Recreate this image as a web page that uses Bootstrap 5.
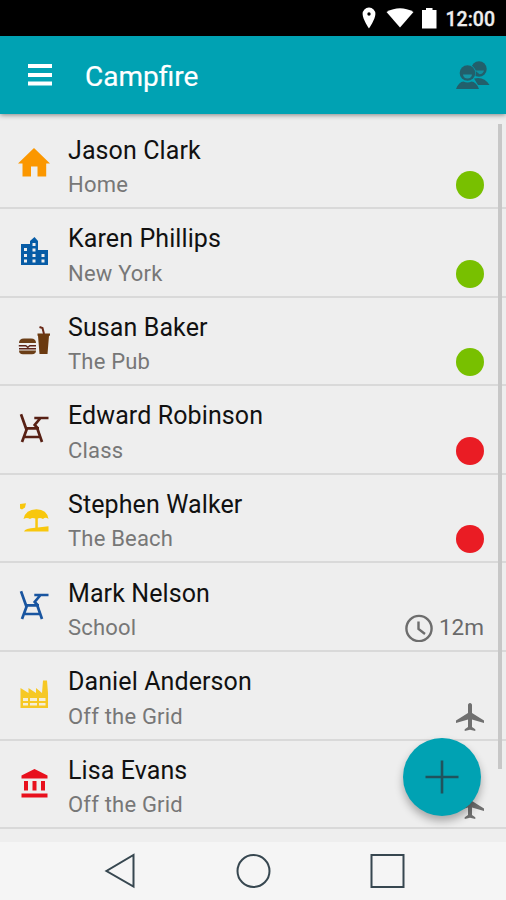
<!DOCTYPE html>
<html lang="en">
<head>
<meta charset="utf-8">
<meta name="viewport" content="width=device-width, initial-scale=1">
<title>Campfire</title>
<link href="https://cdn.jsdelivr.net/npm/bootstrap@5.3.0/dist/css/bootstrap.min.css" rel="stylesheet">
<style>
body{font-family:Roboto,sans-serif;background:#eee;color:#111}
svg{display:block;flex:none}
.phone{width:506px;height:900px}
.status-bar{height:36px;background:#000;padding-right:11px}
.clock-text{font-size:19.5px;line-height:34px;font-weight:500;color:#eee;margin-left:4px;padding-top:3px;-webkit-text-stroke:.3px #eee}
.app-bar{height:78px;background:#00a2b3;padding:0 16px 0 28px;box-shadow:0 1px 5px rgba(0,0,0,.45);z-index:2}
.app-title{font-size:28px;line-height:32px;color:#fff;margin-left:33px;padding-top:3px;-webkit-text-stroke:.2px #fff}
.people{height:78px;padding-top:25px}
.contacts{padding-top:6.4px;height:728px;background:#eee}
.contact{height:88.6px;border-bottom:2px solid #d9d9d9;padding:0 22px 0 18px}
.place{margin-top:26px}
.who{margin-left:18px;padding-top:14.2px}
.who-name{font-size:25px;line-height:32px;letter-spacing:.1px}
.who-place{font-size:22px;line-height:30px;color:#777;padding-top:3.4px;letter-spacing:.2px}
.state{padding-bottom:8px}
.dot{width:28px;height:28px}
.dot-on{background:#78c000}
.dot-off{background:#ea1c24}
.mins{font-size:22.5px;line-height:28px;color:#6a6a6a;margin-left:6px;margin-top:-2px}
.scroll-thumb{right:4px;top:10px;width:4px;height:645px;background:#c7c7c7}
.fab{left:403px;top:624px;width:78px;height:78px;background:#00a2b3;box-shadow:0 5px 9px rgba(0,0,0,.3);padding:0;border:0}
.nav-keys{height:58px;background:#f5f5f5;padding:0 101px 0 104px}
</style>
<script src="https://cdn.jsdelivr.net/npm/bootstrap@5.3.0/dist/js/bootstrap.bundle.min.js"></script>
</head>
<body>
<svg width="0" height="0" class="position-absolute" aria-hidden="true">
<symbol id="desk" viewBox="0 0 32 32"><path d="M3 2.300 8 16.300H21M16.300 6H30.500M22.500 6 16.700 13 20 16.500M9 16.500 4 30M19.300 16.500 24 30M7 25H22" fill="none" stroke="currentColor" stroke-width="2.700"/></symbol>
<symbol id="plane" viewBox="0 0 28 28"><path d="M14 0c-1.200 0-2 1-2 2.200V10L0 17.500V20l12-3.600V24l-3.300 2.300V28l5.300-1.300 5.300 1.300v-1.700L16 24v-7.600L28 20v-2.500L16 10V2.200C16 1 15.200 0 14 0z" fill="currentColor"/></symbol>
</svg>
<main class="phone position-relative overflow-hidden d-flex flex-column">
<div class="status-bar d-flex align-items-center justify-content-end">
<svg width="80" height="24" viewBox="0 0 80 24" fill="#fff"><path d="M7 1.500A6.300 6.300 0 0 0 .6 8C.6 13 7 22.500 7 22.500S13.400 13 13.400 8A6.300 6.300 0 0 0 7 1.500zm0 4.800a1.700 1.700 0 1 1 0 3.400 1.700 1.700 0 0 1 0-3.400z" fill-rule="evenodd"/><path d="M24.500 6Q38-1.500 51.500 6L38 21.500z"/><path d="M64 2h6.500v2H74.500v18.500H60V4h4z"/></svg>
<span class="clock-text">12:00</span>
</div>
<header class="app-bar d-flex align-items-center position-relative">
<svg width="24" height="22" viewBox="0 0 24 22"><path d="M0 2h24M0 11h24M0 19.500h24" stroke="#fff" stroke-width="4"/></svg>
<h1 class="app-title fw-normal mb-0">Campfire</h1>
<div class="people ms-auto">
<svg width="34" height="28" viewBox="0 0 34 28" fill="#225f6b"><circle cx="23" cy="8" r="7.700"/><path d="M18 17.500Q28 15 33.500 24H22z"/><path d="M19 9.500h9a5 5 0 0 1-4.500 3.700" fill="#1090a0"/><circle cx="11.500" cy="12" r="8.400" fill="#00a2b3"/><circle cx="11.500" cy="12" r="7.800"/><path d="M7 13.500h9a4.500 4 0 0 1-9 0z" fill="#1596a5"/><path d="M0 28q3-7.500 7.500-7.500 4 2 8 0Q20 20.500 23 28z"/></svg>
</div>
</header>
<section class="contacts position-relative overflow-hidden">
<div class="contact d-flex"><svg class="place" width="32" height="32" viewBox="0 0 32 32"><path d="M16 2 32 17.500H28.200V30.500H19.500V20.500h-6.500v10H4.500v-13H0z" fill="#fb9700"/></svg>
<div class="who"><div class="who-name">Jason Clark</div><div class="who-place">Home</div></div><div class="state ms-auto align-self-end"><div class="dot dot-on rounded-circle"></div></div></div>
<div class="contact d-flex"><svg class="place" width="32" height="32" viewBox="0 0 32 32"><path d="M3 9h9V6l4.500-4L20 6v9h10v15H3z" fill="#075ca6"/><path d="M6 13h3v3H6zm0 6h3v3H6zm0 5.500h3v3H6zM14.500 8h3v3h-3zm0 5.500h3v3h-3zm0 5.500h3v3h-3zm0 5.500h3v3h-3zM23.500 19h3v3h-3zm0 5.500h3v3h-3z" fill="#eee"/></svg>
<div class="who"><div class="who-name">Karen Phillips</div><div class="who-place">New York</div></div><div class="state ms-auto align-self-end"><div class="dot dot-on rounded-circle"></div></div></div>
<div class="contact d-flex"><svg class="place" width="32" height="32" viewBox="0 0 32 32"><path d="M1 19Q1 14.500 6 14.500h7Q18 14.500 18 19zM1 26.500h17q0 3.800-4 3.800H5q-4 0-4-3.800z" fill="#6b3e17"/><path d="M.8 21.800h7l2 1.500 2-1.500H18M1 24.800h17" fill="none" stroke="#5c2418" stroke-width="1.400"/><path d="M19.500 9.500h12.500v2.200h-1L29.500 30H21.500L20 11.700h-.5z" fill="#6b3a10"/><path d="M21.500 3l3 1 1.500 6" fill="none" stroke="#6b2a18" stroke-width="2"/></svg>
<div class="who"><div class="who-name">Susan Baker</div><div class="who-place">The Pub</div></div><div class="state ms-auto align-self-end"><div class="dot dot-on rounded-circle"></div></div></div>
<div class="contact d-flex"><svg class="place" width="32" height="32" color="#572014"><use href="#desk"/></svg>
<div class="who"><div class="who-name">Edward Robinson</div><div class="who-place">Class</div></div><div class="state ms-auto align-self-end"><div class="dot dot-off rounded-circle"></div></div></div>
<div class="contact d-flex"><svg class="place" width="32" height="32" viewBox="0 0 32 32" fill="#f8c70d"><path d="M2 3l6-.8-1 4.300L4 8.500 2 7.500zM5.500 18Q7.500 8.500 18.500 8.300 29 8.500 30.500 18q-3-2.500-5.500 0-3-2-5.200-.4V26.500l10.700-1.200V30.500H6q1-3 11.300-3.700V17.600Q14.500 16 12 18q-3-2.200-6.500 0z"/></svg>
<div class="who"><div class="who-name">Stephen Walker</div><div class="who-place">The Beach</div></div><div class="state ms-auto align-self-end"><div class="dot dot-off rounded-circle"></div></div></div>
<div class="contact d-flex"><svg class="place" width="32" height="32" color="#1955a0"><use href="#desk"/></svg>
<div class="who"><div class="who-name">Mark Nelson</div><div class="who-place">School</div></div><div class="state ms-auto align-self-end d-flex align-items-center"><svg width="28" height="28" viewBox="0 0 28 28" fill="none" stroke="#6d6d6d" stroke-width="2.400"><circle cx="14" cy="14.500" r="12.600"/><path d="M13.500 7.500V15l6.500 5"/></svg><span class="mins">12m</span></div></div>
<div class="contact d-flex"><svg class="place" width="32" height="32" viewBox="0 0 32 32"><path d="M2.500 10 10.500 15V10l7.500 5V10l6 5L25 2.500h4L30 15V30H2.500z" fill="#f6c824"/><path d="M5 20h5v3H5zm7 0h7v3h-7zm9 0h6.500v3H21zM5 25h5v2.500H5zm7 0h7v2.500h-7zm9 0h6.500v2.500H21z" fill="#f5eed8"/></svg>
<div class="who"><div class="who-name">Daniel Anderson</div><div class="who-place">Off the Grid</div></div><div class="state ms-auto align-self-end"><svg width="28" height="28" color="#707070"><use href="#plane"/></svg></div></div>
<div class="contact d-flex"><svg class="place" width="32" height="32" viewBox="0 0 32 32"><path d="M16.500 2 29.500 8.500V11.500H3.500V8.500zM6 14h4v9.500H6zm8.500 0h4v9.500h-4zm8.500 0h4v9.500h-4zM3.500 26.500h26V30.500h-26z" fill="#e8101d"/></svg>
<div class="who"><div class="who-name">Lisa Evans</div><div class="who-place">Off the Grid</div></div><div class="state ms-auto align-self-end"><svg width="28" height="28" color="#707070"><use href="#plane"/></svg></div></div>
<div class="scroll-thumb position-absolute"></div>
<button class="fab position-absolute rounded-circle d-flex align-items-center justify-content-center" type="button" aria-label="Add"><svg width="34" height="34" viewBox="0 0 34 34"><path d="M17 .5v33M.5 17h33" stroke="#20535d" stroke-width="2.600"/></svg></button>
</section>
<nav class="nav-keys d-flex align-items-center justify-content-between" aria-label="System">
<svg width="34" height="36" viewBox="0 0 34 36" fill="none" stroke="#374750" stroke-width="2"><path d="M29.500 2V33.500L2.500 18z"/></svg>
<svg width="36" height="36" viewBox="0 0 36 36" fill="none" stroke="#374750" stroke-width="2"><circle cx="17.500" cy="18" r="16"/></svg>
<svg width="36" height="36" viewBox="0 0 36 36" fill="none" stroke="#374750" stroke-width="2"><path d="M2.500 2h32v32h-32z"/></svg>
</nav>
</main>
</body>
</html>
